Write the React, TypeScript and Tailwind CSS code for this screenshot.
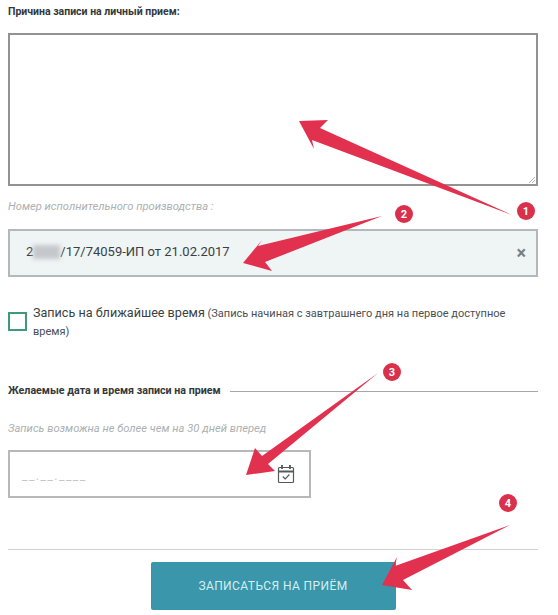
import React from 'react';

const Arrow = ({ points }: { points: string }) => (
  <polygon points={points} fill="#e2304f" />
);

const Badge = ({ x, y, n }: { x: number; y: number; n: number }) => (
  <g>
    <circle cx={x} cy={y} r="9" fill="#d9304c" />
    <text x={x} y={y + 4} textAnchor="middle" fontSize="11" fontWeight="700" fill="#fff" fontFamily="Roboto, sans-serif">
      {n}
    </text>
  </g>
);

const CalendarIcon = () => (
  <svg width="18" height="20" viewBox="0 0 18 20" fill="none" stroke="#55595c" strokeWidth="1.2">
    <rect x="1.5" y="3.5" width="15" height="15" rx="1" />
    <path d="M1.5 7.5h15" strokeWidth="2" />
    <path d="M5 1v4M13 1v4" strokeWidth="1.8" />
    <path d="M5.8 12.5l2.4 2.4 4.2-4.4" />
  </svg>
);

export default function App() {
  return (
    <div className="relative w-[558px] h-[615px] overflow-hidden bg-white font-['Roboto',sans-serif]">
      <div className="w-[530px] ml-2 pt-[5px] flex flex-col">
        <div className="text-[10.5px] leading-[14px] font-bold text-[#33383a]">Причина записи на личный прием:</div>

        <div className="relative mt-[14px] h-[153px] border-2 border-[#929292] bg-white">
          <svg className="absolute right-0 bottom-0" width="8" height="8" viewBox="0 0 8 8" stroke="#999" strokeWidth="0.8">
            <path d="M1 7l6-6M4 7l3-3" />
          </svg>
        </div>

        <div className="mt-[14px] text-[11.2px] leading-[14px] italic text-[#acb0b2]">Номер исполнительного производства :</div>

        <div className="mt-[15px] h-[48px] border-2 border-[#b4b8ba] bg-[#eff4f5] flex items-center justify-between pl-4 pr-[10px]">
          <div className="flex items-center text-[13px] text-[#3a3f42] -mt-[3px]">
            <span>2</span>
            <span className="w-[27px] h-[14px] bg-[#c4c8ca] blur-[2px]" />
            <span>/17/74059-ИП от 21.02.2017</span>
          </div>
          <span className="text-[18px] leading-none font-bold text-[#7b8083]">×</span>
        </div>

        <div className="mt-[27px] flex items-start">
          <div className="mt-[8px] w-[19px] h-[19px] shrink-0 border-2 border-[#3f9a7b] bg-white" />
          <div className="ml-[6px] w-[480px] text-[11px] leading-[18px] text-[#4a4f52]">
            <span className="text-[12.6px] leading-[18px] text-[#3a3f42]">Запись на ближайшее время</span> (Запись начиная с завтрашнего дня на первое доступное время)
          </div>
        </div>

        <div className="mt-[43px] flex items-center gap-[9px]">
          <span className="text-[10.7px] leading-[14px] font-bold text-[#33383a]">Желаемые дата и время записи на прием</span>
          <div className="flex-1 h-px bg-[#a5a8aa]" />
        </div>

        <div className="mt-[24px] text-[11.2px] leading-[14px] italic text-[#acb0b2]">Запись возможна не более чем на 30 дней вперед</div>

        <div className="mt-[14px] w-[303px] h-[48px] border-2 border-[#b8b8b8] flex items-center justify-between pl-3 pr-[14px]">
          <span className="mt-[4px] text-[12px] tracking-[1.5px] text-[#c4c7c9]">__.__.____</span>
          <CalendarIcon />
        </div>

        <div className="mt-[51px] h-px bg-[#cfd2d3]" />

        <button className="mt-[12px] mx-auto w-[245px] h-[48px] rounded-[2px] bg-[#3a96aa] text-[12px] tracking-[0.4px] text-[#d5eef3] flex items-center justify-center">
          ЗАПИСАТЬСЯ НА ПРИЁМ
        </button>
      </div>

      {/* annotation arrows over the form */}
      <svg className="absolute left-0 top-0 pointer-events-none" width="558" height="615" viewBox="0 0 558 615">
        <Arrow points="299,121 328,120 320,128 512,215 312,140 314,149" />
        <Arrow points="382,216 258,246 262,240 243,263 272,271 265,262" />
        <Arrow points="378,373 262,456 255,448 246,475 275,471 268,464" />
        <Arrow points="510,525 395,566 397,557 382,585 412,590 403,580" />
        <Badge x={526} y={211} n={1} />
        <Badge x={404} y={214} n={2} />
        <Badge x={392} y={372} n={3} />
        <Badge x={508} y={503} n={4} />
      </svg>
    </div>
  );
}
